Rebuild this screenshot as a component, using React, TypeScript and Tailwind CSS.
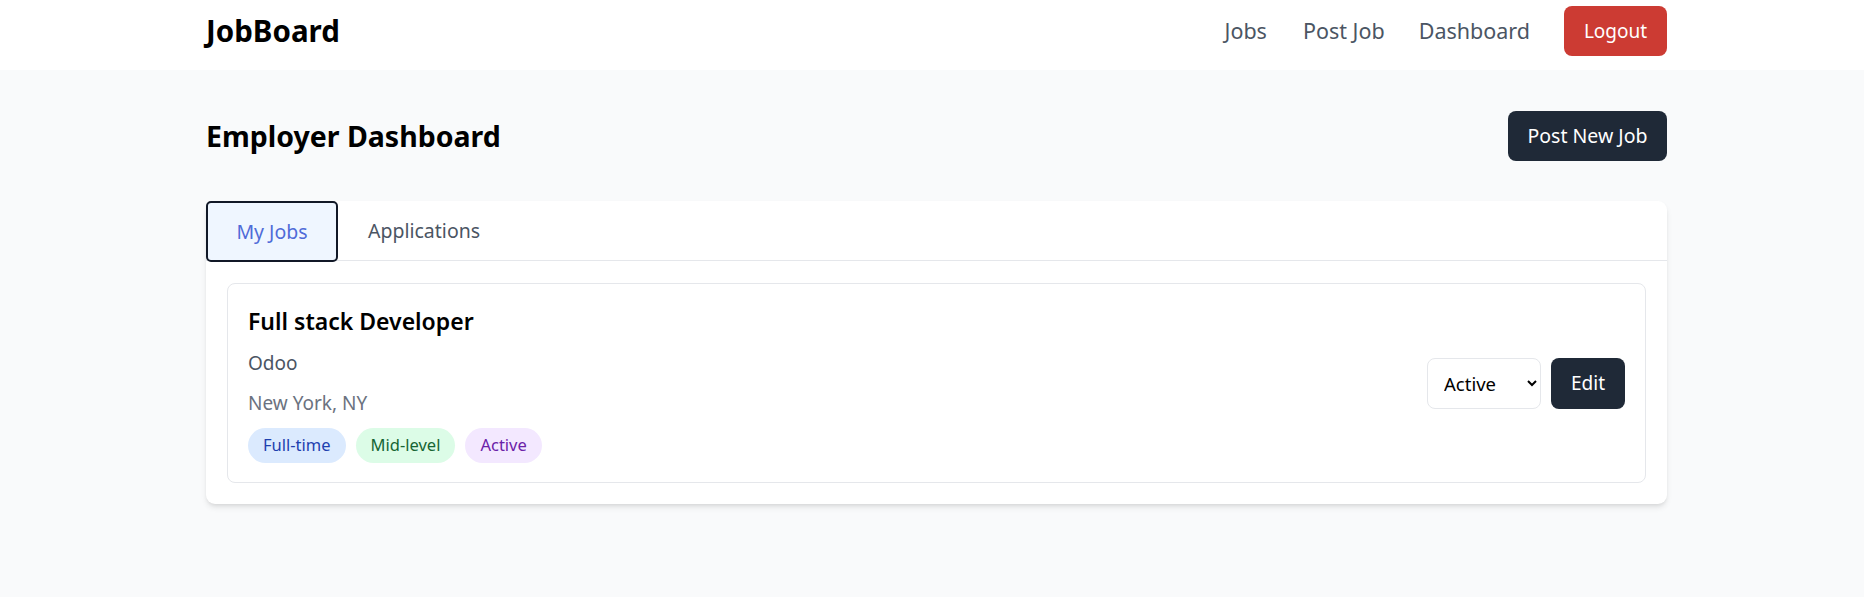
export default function App() {
  return (
    <div className="min-h-screen bg-[#f9fafb] font-['Noto_Sans',sans-serif]">
      <nav className="bg-white pt-[6px] pb-[14px]">
        <div className="ml-[206px] w-[1461px] h-[50px] flex items-center justify-between">
          <span className="text-[29.5px] font-bold text-black">JobBoard</span>
          <div className="flex items-center">
            <a className="text-[21.5px] text-[#4b5563] mr-[36px]">Jobs</a>
            <a className="text-[21.5px] text-[#4b5563] mr-[34px]">Post Job</a>
            <a className="text-[21.5px] text-[#4b5563] mr-[34px]">Dashboard</a>
            <button className="bg-[#cc3b33] text-white rounded-[8px] w-[103px] h-[50px] text-[19px]">
              Logout
            </button>
          </div>
        </div>
      </nav>

      <main className="ml-[206px] w-[1461px] pt-[41px]">
        <div className="flex items-center justify-between">
          <h1 className="text-[28.5px] font-bold text-black">Employer Dashboard</h1>
          <button className="bg-[#1f2937] text-white rounded-[8px] w-[159px] h-[50px] text-[19.5px]">
            Post New Job
          </button>
        </div>

        <div className="mt-[40px] bg-white rounded-[9px] shadow-md">
          <div className="flex h-[60px] border-b border-[#e5e7eb]">
            <button className="w-[132px] h-[61px] border-2 border-[#111827] rounded-[5px] bg-[#eff6ff] text-[#4f6bd8] text-[19.5px]">
              My Jobs
            </button>
            <button className="px-[30px] text-[19.5px] text-[#4b5563]">Applications</button>
          </div>

          <div className="px-[21px] pt-[22px] pb-[21px]">
            <div className="border border-[#e5e7eb] rounded-[8px] h-[200px] px-[20px] flex items-center justify-between">
              <div className="flex flex-col pt-[3px]">
                <h3 className="text-[23px] font-semibold text-black leading-[28px]">Full stack Developer</h3>
                <p className="text-[19px] text-[#4b5563] leading-[28px] mt-[14px]">Odoo</p>
                <p className="text-[19px] text-[#6b7280] leading-[28px] mt-[12px]">New York, NY</p>
                <div className="flex gap-[10px] mt-[11px]">
                  <span className="h-[35px] px-[15px] flex items-center rounded-full bg-[#dbeafe] text-[#1e40af] text-[16.5px]">
                    Full-time
                  </span>
                  <span className="h-[35px] px-[15px] flex items-center rounded-full bg-[#dcfce7] text-[#166534] text-[16.5px]">
                    Mid-level
                  </span>
                  <span className="h-[35px] px-[15px] flex items-center rounded-full bg-[#f3e8ff] text-[#6b21a8] text-[16.5px]">
                    Active
                  </span>
                </div>
              </div>
              <div className="flex items-center gap-[10px]">
                <select
                  defaultValue="active"
                  className="w-[114px] h-[51px] border border-[#e5e7eb] rounded-[8px] bg-white pl-[12px] pr-[8px] text-[18.5px] text-black"
                >
                  <option value="active">Active</option>
                  <option value="closed">Closed</option>
                  <option value="draft">Draft</option>
                </select>
                <button className="bg-[#1f2937] text-white rounded-[8px] w-[74px] h-[51px] text-[19px]">
                  Edit
                </button>
              </div>
            </div>
          </div>
        </div>
      </main>
    </div>
  );
}
